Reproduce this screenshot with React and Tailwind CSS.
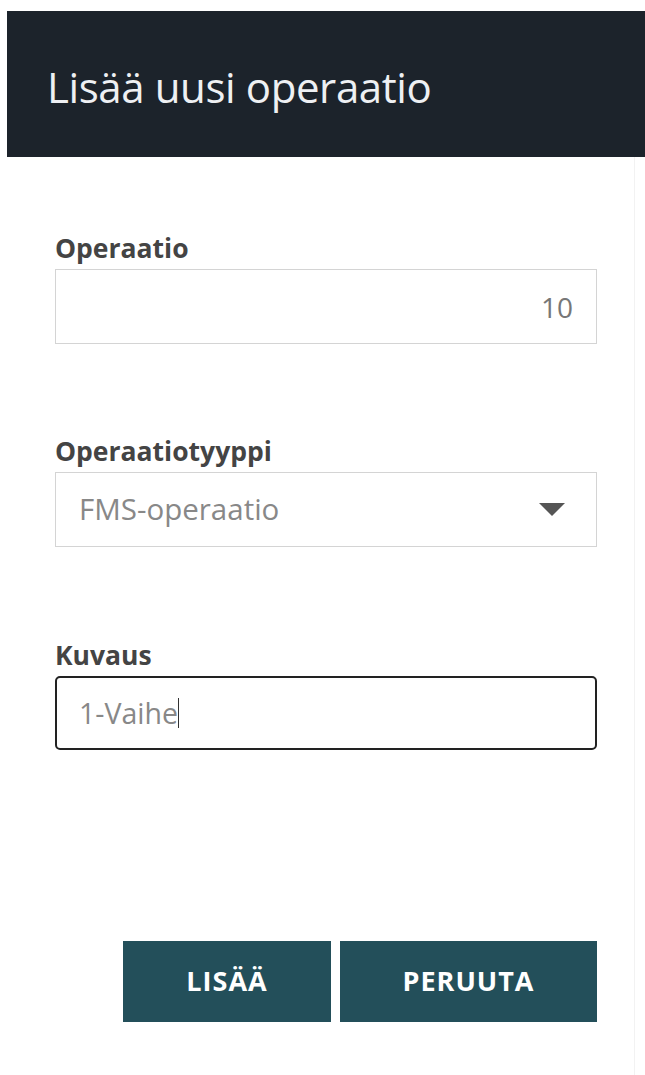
import { useState } from 'react';

const Field = ({ label, children }) => (
  <div className="flex flex-col">
    <label className="text-[26.5px] font-bold text-[#444] leading-[30px] mb-[6px]">{label}</label>
    {children}
  </div>
);

const App = () => {
  const [description] = useState('1-Vaihe');

  return (
    <div
      className="min-h-[1075px] bg-white pt-[11px] pl-[7px]"
      style={{ fontFamily: '"Open Sans", "Noto Sans", sans-serif' }}
    >
      {/* Header */}
      <div className="h-[146px] bg-[#1c232b] flex items-center pl-[40px] pt-[4px]">
        <h1 className="text-[42px] text-[#eef0f3] font-normal tracking-[-0.4px]">Lisää uusi operaatio</h1>
      </div>

      {/* Body */}
      <div className="mr-[10px] border-r border-[#f2f2f2] h-[918px] pl-[48px] pr-[37px] pt-[76px]">
        <Field label="Operaatio">
          <div className="h-[75px] border border-[#d4d4d4] flex items-center justify-end pr-[23px]">
            <span className="text-[28px] text-[#777]">10</span>
          </div>
        </Field>

        <div className="h-[92px]" />

        <Field label="Operaatiotyyppi">
          <div className="h-[75px] border border-[#d4d4d4] flex items-center justify-between pl-[23px] pr-[31px]">
            <span className="text-[29.5px] text-[#888]">FMS-operaatio</span>
            <svg width="26" height="13" viewBox="0 0 26 13">
              <path d="M0 0 L26 0 L13 13 Z" fill="#555" />
            </svg>
          </div>
        </Field>

        <div className="h-[93px]" />

        <Field label="Kuvaus">
          <div className="h-[74px] border-2 border-[#222] rounded-[5px] flex items-center pl-[22px]">
            <span className="text-[28.5px] text-[#888]">{description}</span>
            <span className="w-[1.5px] h-[30px] bg-[#333]" />
          </div>
        </Field>

        {/* Actions */}
        <div className="flex justify-end gap-[9px] mt-[191px]">
          <button className="w-[208px] h-[81px] bg-[#234f5a] text-white text-[27px] font-bold tracking-[1px]">
            LISÄÄ
          </button>
          <button className="w-[257px] h-[81px] bg-[#234f5a] text-white text-[27px] font-bold tracking-[1px]">
            PERUUTA
          </button>
        </div>
      </div>
    </div>
  );
};

export default App;
